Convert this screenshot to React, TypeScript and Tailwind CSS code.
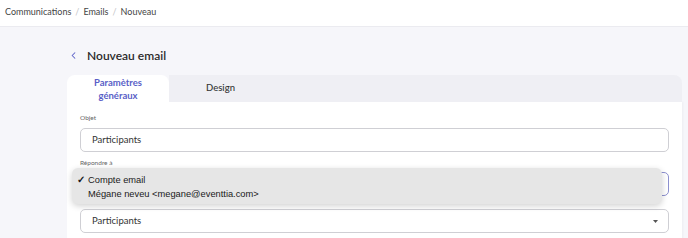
import { ChevronLeft } from 'lucide-react';

const ui = { fontFamily: '"Lato", "Noto Sans", sans-serif' };
const sys = { fontFamily: '"Liberation Sans", Arial, sans-serif' };

export default function App() {
  return (
    <div className="w-[688px] h-[238px] overflow-hidden bg-[#f6f6fa] text-[#333]" style={ui}>
      {/* Breadcrumb */}
      <div className="h-[27px] bg-white border-b border-[#ebebf0] flex items-center px-[5px] pb-[3px] text-[9px] text-[#444]">
        <span>Communications</span>
        <span className="mx-[4px] text-[#c4c4c8]">/</span>
        <span>Emails</span>
        <span className="mx-[4px] text-[#c4c4c8]">/</span>
        <span>Nouveau</span>
      </div>

      <div className="pl-[67px] pr-[6px]">
        {/* Title */}
        <div className="h-[48px] flex items-center pt-[9px]">
          <ChevronLeft className="w-[11px] h-[11px] text-[#5a5fc7] ml-[1px]" strokeWidth={2.2} />
          <h1 className="ml-[8px] text-[12px] font-semibold text-[#2b2b2b]">Nouveau email</h1>
        </div>

        {/* Tabs */}
        <div className="flex h-[27px]">
          <div className="w-[102px] bg-white rounded-t-lg flex flex-col items-center justify-center text-[9.5px] font-bold leading-[13px] text-[#5a5fc7] text-center">
            <span>Paramètres</span>
            <span>généraux</span>
          </div>
          <div className="flex-1 bg-[#efeff4] rounded-tr-lg flex items-center">
            <div className="w-[103px] text-center text-[9.5px] font-medium text-[#333]">Design</div>
          </div>
        </div>

        {/* Card */}
        <div className="bg-white px-[13px] pt-[10px] h-[200px] shadow-[1px_0_2px_rgba(0,0,0,0.04)]">
          <div className="h-[12px] leading-[12px] text-[6.5px] text-[#666]">Objet</div>
          <div className="mt-[4px] h-[24px] border border-[#cfcfd4] rounded-[5px] flex items-center px-[11px] text-[9.5px] text-[#333]">
            Participants
          </div>

          <div className="mt-[5px] h-[12px] leading-[12px] text-[6.5px] text-[#666]">Répondre à</div>
          <div className="relative mt-[3px] h-[24px] border border-[#8d90cf] rounded-[5px]">
            <div
              className="absolute left-[-9px] top-[-5px] w-[590px] h-[36px] bg-[#e6e6e6] rounded-[6px] shadow-[0_2px_6px_rgba(0,0,0,0.18)] pt-[5px] text-[9.3px] leading-[14px] text-[#1a1a1a]"
              style={sys}
            >
              <div className="flex">
                <span className="w-[16px] pl-[5px] text-[10px] font-bold">✓</span>
                <span>Compte email</span>
              </div>
              <div className="pl-[16px]">Mégane neveu &lt;megane@eventtia.com&gt;</div>
            </div>
          </div>

          <div className="mt-[13px] h-[24px] border border-[#cfcfd4] rounded-[5px] flex items-center justify-between px-[11px] text-[9.5px] text-[#333]">
            <span>Participants</span>
            <svg width="5" height="3" viewBox="0 0 5 3" className="mr-[-1px]">
              <path d="M0 0 L5 0 L2.5 3 Z" fill="#555" />
            </svg>
          </div>
        </div>
      </div>
    </div>
  );
}
